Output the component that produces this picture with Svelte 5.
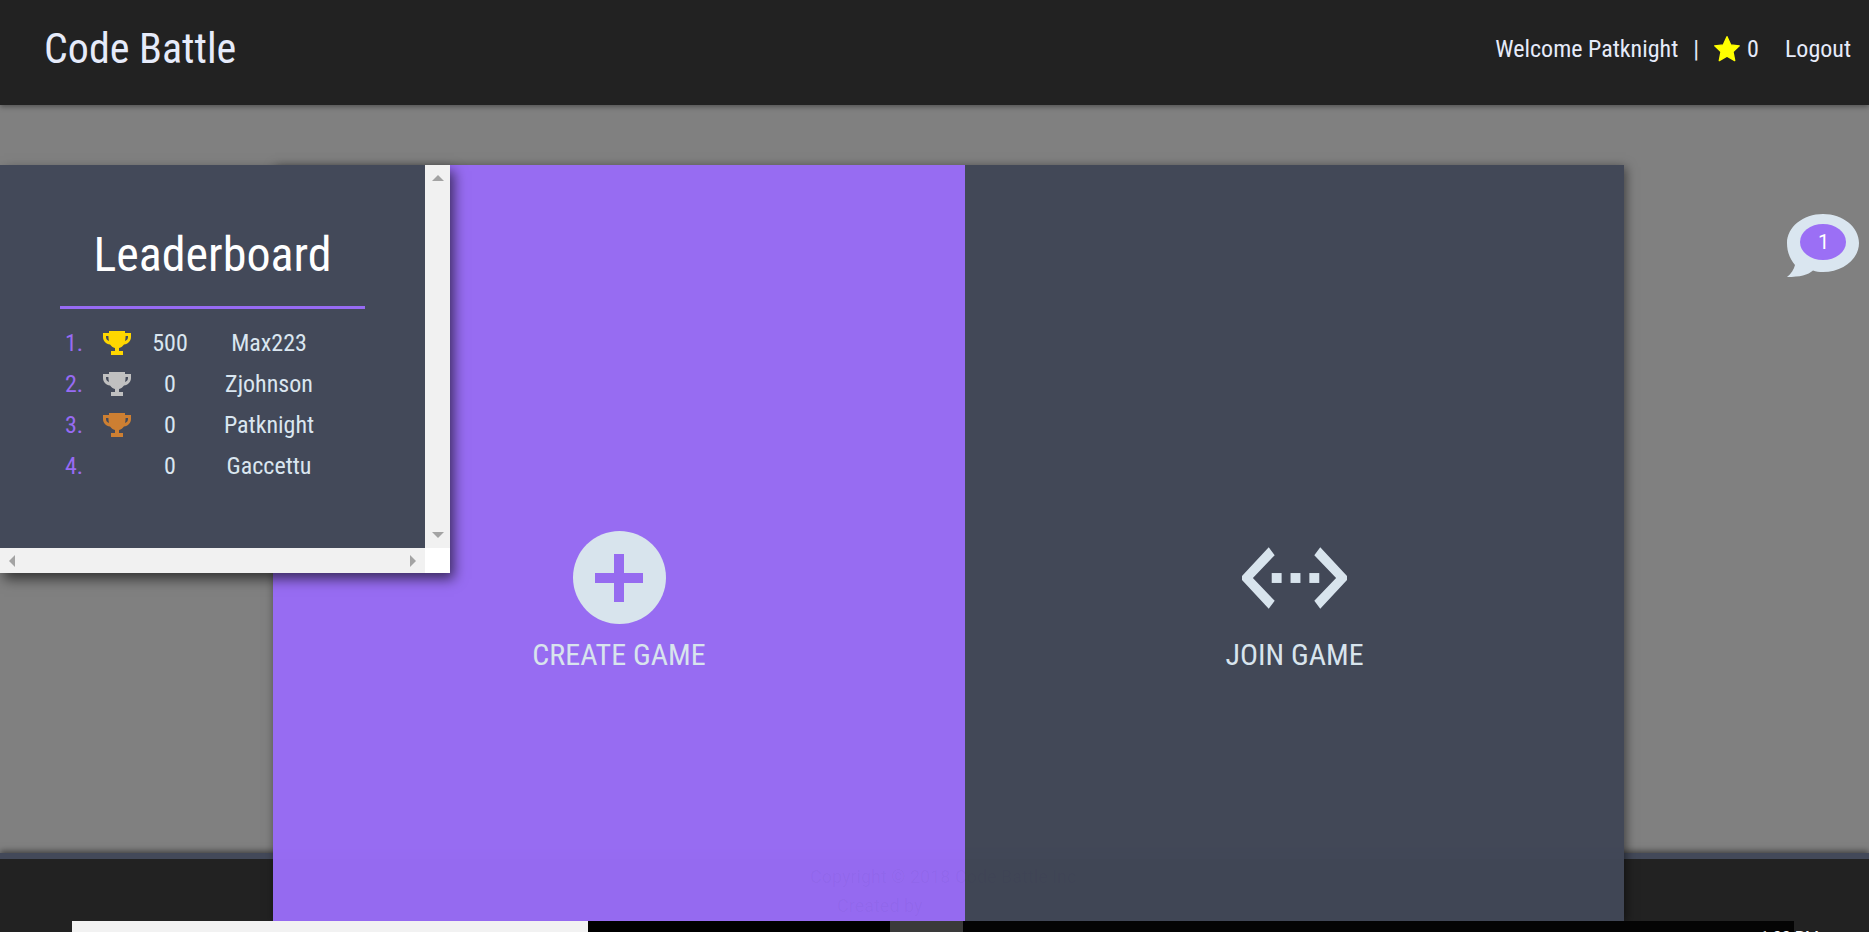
<script>
  // leaderboard rows, trophy colour is empty past third place
  const leaders = [
    { rank: 1, trophy: '#ffd700', score: 500, name: 'Max223' },
    { rank: 2, trophy: '#c0c0c0', score: 0, name: 'Zjohnson' },
    { rank: 3, trophy: '#cd7f32', score: 0, name: 'Patknight' },
    { rank: 4, trophy: '', score: 0, name: 'Gaccettu' }
  ];
</script>

<div class="page">
  <header class="topbar">
    <div class="brand">Code Battle</div>
    <nav class="usernav">
      <span>Welcome Patknight</span>
      <span class="sep">|</span>
      <svg class="star" viewBox="0 0 24 24" aria-hidden="true">
        <path d="M12 1.500l3.200 7 7.300.8-5.400 5 1.500 7.600L12 18.100l-6.600 3.800 1.500-7.600-5.400-5 7.300-.8z" fill="#ffff00" stroke="#ffff00" stroke-width="1.200" stroke-linejoin="round"/>
      </svg>
      <span class="stars">0</span>
      <span class="logout">Logout</span>
    </nav>
  </header>

  <main class="stage">
    <div class="panels">
      <button class="panel create">
        <span class="circle">
          <svg viewBox="0 0 48 48" width="48" height="48" aria-hidden="true">
            <path d="M19 0h10v19h19v10H29v19H19V29H0V19h19z" fill="#976bf3"/>
          </svg>
        </span>
        <span class="label">CREATE GAME</span>
      </button>
      <button class="panel join">
        <svg class="joinicon" viewBox="0 0 106 62" width="105" height="62" aria-hidden="true">
          <path d="M27 0l6 8L11 31l22 23-6 8L0 33v-4z" fill="#dae6f0"/>
          <path d="M79 0l-6 8 22 23-22 23 6 8 27-29v-4z" fill="#dae6f0"/>
          <rect x="30" y="26" width="10" height="10" fill="#dae6f0"/>
          <rect x="49" y="26" width="10" height="10" fill="#dae6f0"/>
          <rect x="68" y="26" width="10" height="10" fill="#dae6f0"/>
        </svg>
        <span class="label">JOIN GAME</span>
      </button>
    </div>

    <aside class="board">
      <div class="board-view">
        <h2>Leaderboard</h2>
        <div class="rule"></div>
        <div class="rows">
          {#each leaders as row}
            <div class="row">
              <span class="rank">{row.rank}.</span>
              <span class="cup">
                {#if row.trophy}
                  <svg viewBox="0 0 28 24" width="28" height="24" aria-hidden="true">
                    <path d="M6 0h16v2h6v4c0 4-3 7-7 7.500-1 1.500-3 3-5 3.500v3h4v4H8v-4h4v-3c-2-.5-4-2-5-3.500C3 13 0 10 0 6V2h6zM3 5v1c0 2 1 3.300 3 4-.4-1.500-.6-3.200-.6-5zm22 0h-2.400c0 1.800-.2 3.500-.6 5 2-.7 3-2 3-4z" fill={row.trophy} fill-rule="evenodd"/>
                  </svg>
                {/if}
              </span>
              <span class="score">{row.score}</span>
              <span class="name">{row.name}</span>
            </div>
          {/each}
        </div>
      </div>
      <div class="vbar">
        <i class="arrow up"></i>
        <i class="arrow down"></i>
      </div>
      <div class="hbar">
        <i class="arrow left"></i>
        <i class="arrow right"></i>
      </div>
      <div class="corner"></div>
    </aside>

    <div class="chat">
      <svg viewBox="0 0 73 64" width="73" height="64" aria-hidden="true">
        <path d="M37 0c20 0 36 13 36 29S57 58 37 58c-4 0-7-.5-10-1.500C22 61 14 63 1 63c4-3 7-8 8-12C4 45 1 38 1 29 1 13 17 0 37 0z" fill="#dae6f0"/>
        <ellipse cx="37" cy="28" rx="23" ry="18" fill="#9b6ff5"/>
      </svg>
      <span class="count">1</span>
    </div>
  </main>

  <footer class="foot"></footer>

  <div class="taskbar">
    <div class="tb-start"></div>
    <div class="tb-white"></div>
    <div class="tb-black"></div>
    <div class="tb-tab"></div>
    <div class="tb-rest"></div>
    <div class="tb-end"></div>
    <span class="clock">1:33 PM</span>
  </div>

  <!-- footer copy only shows through the panels as a faint ghost -->
  <div class="ghost">
    <div>Copyright © 2018 Code Battle Inc</div>
    <div class="ghost-by">Created by</div>
  </div>
</div>

<style>
  :global(body) { margin: 0; background: #808080; }

  .page {
    display: flex;
    flex-direction: column;
    height: 932px;
    overflow: hidden;
    position: relative;
    font-family: Roboto, "Liberation Sans", sans-serif;
    font-stretch: condensed;
    color: #dae6f0;
  }

  .topbar {
    flex: 0 0 105px;
    display: flex;
    align-items: center;
    justify-content: space-between;
    padding: 0 18px 8px 44px;
    box-sizing: border-box;
    background: #222;
    color: #e6ebfa;
    box-shadow: 0 2px 5px rgba(0, 0, 0, 0.35);
    position: relative;
    z-index: 3;
  }
  .brand { font-size: 42px; }
  .usernav { display: flex; align-items: center; font-size: 24px; }
  .sep { margin: 0 14px 0 15px; }
  .star { width: 28px; height: 28px; margin-right: 6px; }
  .logout { margin-left: 26px; }

  .stage {
    flex: 0 0 748px;
    min-height: 0;
    height: 748px;
    position: relative;
    background: #808080;
    padding: 60px 0 0 273px;
    box-sizing: border-box;
  }

  .panels {
    display: flex;
    position: relative;
    z-index: 2;
    width: 1351px;
    height: 756px;
    opacity: 0.98;
    box-shadow: 2px 2px 10px rgba(0, 0, 0, 0.5);
  }
  .panel {
    display: flex;
    flex-direction: column;
    align-items: center;
    border: 0;
    padding: 366px 0 0;
    margin: 0;
    font: inherit;
    color: #dae6f0;
  }
  .create { flex: 0 0 692px; background: #986cf5; }
  .join { flex: 1; background: #414757; }
  .circle {
    width: 93px;
    height: 93px;
    border-radius: 50%;
    background: #dae6f0;
    display: flex;
    align-items: center;
    justify-content: center;
  }
  .joinicon { margin-top: 16px; margin-bottom: 15px; }
  .label { margin-top: 13px; font-size: 30px; line-height: 36px; }

  .board {
    position: absolute;
    left: 0;
    top: 60px;
    z-index: 3;
    width: 450px;
    height: 408px;
    display: grid;
    grid-template-columns: 425px 25px;
    grid-template-rows: 383px 25px;
    background: #fff;
    box-shadow: 4px 6px 12px rgba(0, 0, 0, 0.6);
  }
  .board-view { background: #434959; overflow: hidden; padding-top: 60px; box-sizing: border-box; }
  h2 {
    margin: 0;
    width: 425px;
    text-align: center;
    font-size: 48px;
    line-height: 60px;
    font-weight: 400;
    color: #fff;
  }
  .rule { width: 305px; height: 3px; margin: 21px 0 0 60px; background: #976bf3; }
  .rows { margin: 13px 0 0 60px; width: 305px; }
  .row { display: flex; align-items: center; height: 41px; font-size: 24px; }
  .rank { width: 32px; padding-left: 5px; box-sizing: border-box; color: #976bf3; }
  .cup { width: 58px; padding-left: 11px; box-sizing: border-box; display: flex; }
  .score { width: 40px; text-align: center; }
  .name { width: 140px; margin-left: 9px; text-align: center; }

  .vbar, .hbar { background: #f1f1f1; position: relative; }
  .corner { background: #fff; }
  .arrow { position: absolute; width: 0; height: 0; border: 6px solid transparent; }
  .up { left: 7px; top: 10px; border-top: 0; border-bottom-color: #a3a3a3; }
  .down { left: 7px; bottom: 10px; border-bottom: 0; border-top-color: #a3a3a3; }
  .left { left: 9px; top: 7px; border-left: 0; border-right-color: #a3a3a3; }
  .right { right: 9px; top: 7px; border-right: 0; border-left-color: #a3a3a3; }

  .chat { position: absolute; left: 1786px; top: 109px; width: 73px; height: 64px; }
  .chat svg { display: block; }
  .count {
    position: absolute;
    left: 1px;
    width: 73px;
    top: 13px;
    text-align: center;
    font-size: 20px;
    line-height: 30px;
    color: #fff;
    font-stretch: normal;
  }

  .foot {
    flex: 0 0 68px;
    box-sizing: border-box;
    background: #222;
    border-top: 6px solid #434959;
    box-shadow: 0 -2px 6px rgba(0, 0, 0, 0.5);
    position: relative;
    z-index: 1;
  }

  .taskbar { flex: 1; display: flex; position: relative; z-index: 4; background: #000; overflow: hidden; }
  .tb-start { width: 72px; background: #222; }
  .tb-white { width: 516px; background: #f2f2f2; }
  .tb-black { width: 302px; background: #000; }
  .tb-tab { width: 73px; background: #3a3a3a; }
  .tb-rest { width: 831px; background: #040404; }
  .tb-end { flex: 1; background: #222; }
  .clock {
    position: absolute;
    left: 1760px;
    top: 8px;
    font-size: 16px;
    line-height: 18px;
    font-stretch: normal;
    color: #fff;
  }

  .ghost {
    position: absolute;
    left: 810px;
    top: 862px;
    z-index: 3;
    font-size: 18px;
    line-height: 29px;
    font-stretch: normal;
    color: rgba(40, 20, 110, 0.04);
  }
  .ghost-by { margin-left: 27px; }
</style>
